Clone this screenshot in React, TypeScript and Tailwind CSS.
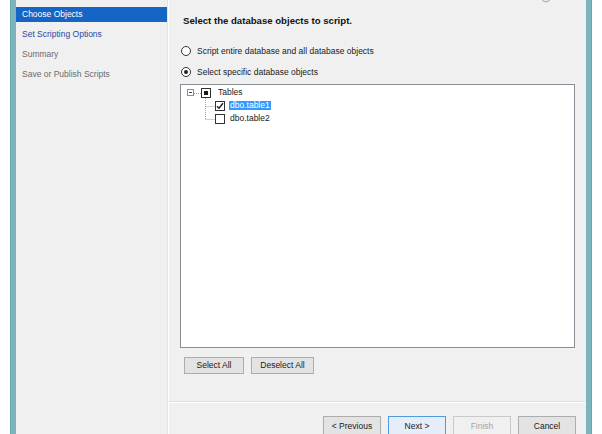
import React from "react";

const Radio = ({ checked, label }: { checked?: boolean; label: string }) => (
  <div className="flex items-center h-[12px] pl-[12px] gap-[6px]">
    <span className="w-[10px] h-[10px] rounded-full border border-[#333333] bg-white flex items-center justify-center">
      {checked && <span className="w-[4px] h-[4px] rounded-full bg-[#222222]" />}
    </span>
    <span className="text-[#1a1a1a]">{label}</span>
  </div>
);

const Check = ({ state }: { state: "none" | "checked" | "mixed" }) => (
  <span className="w-[10px] h-[10px] border border-[#333333] bg-white flex items-center justify-center shrink-0">
    {state === "mixed" && <span className="w-[4px] h-[4px] bg-[#1a1a1a]" />}
    {state === "checked" && (
      <svg width="8" height="8" viewBox="0 0 8 8">
        <path d="M1 4.2 L3 6.2 L7 1.2" fill="none" stroke="#1a1a1a" strokeWidth="1.4" />
      </svg>
    )}
  </span>
);

const Btn = ({
  label,
  w,
  h,
  variant,
}: {
  label: string;
  w: string;
  h: string;
  variant?: "default" | "primary" | "disabled";
}) => {
  const base = "flex items-center justify-center border shrink-0 " + w + " " + h + " ";
  const cls =
    variant === "primary"
      ? "border-[#4f9be0] bg-[#e5eef8] text-[#1a1a1a]"
      : variant === "disabled"
      ? "border-[#c9c9c9] bg-[#f0f0f0] text-[#a5a5a5]"
      : "border-[#adadad] bg-[#e3e3e3] text-[#1a1a1a]";
  return <div className={base + cls}>{label}</div>;
};

export default function App() {
  return (
    <div className="w-[602px] h-[434px] bg-white flex overflow-hidden font-['Liberation_Sans',Arial,sans-serif] text-[8.5px] leading-none">
      <div className="w-[10px] bg-white shrink-0" />
      <div className="w-[6px] shrink-0 bg-[#7cb3bc] border-l border-[#68a6b0]" />
      {/* Left nav */}
      <div className="w-[151px] shrink-0 bg-[#f0f0f0] pt-[7px] flex flex-col gap-[5px]">
        <div className="h-[15px] bg-[#1565c6] text-white flex items-center pl-[6px]">Choose Objects</div>
        <div className="h-[15px] text-[#2b47a0] flex items-center pl-[6px]">Set Scripting Options</div>
        <div className="h-[15px] text-[#6b6b6b] flex items-center pl-[6px]">Summary</div>
        <div className="h-[15px] text-[#6b6b6b] flex items-center pl-[6px]">Save or Publish Scripts</div>
      </div>
      <div className="w-[2px] shrink-0 bg-white border-l border-[#e4e4e4]" />
      {/* Right content */}
      <div className="w-[417px] shrink-0 bg-[#f0f0f0] flex flex-col relative">
        <svg className="absolute left-[372px] top-[-7px]" width="10" height="10" viewBox="0 0 10 10">
          <circle cx="5" cy="5" r="4" fill="#dfe6ee" stroke="#9aaabb" strokeWidth="1" />
        </svg>
        <div className="h-[14px] mt-[14px] pl-[14px] flex items-center font-bold text-[9.6px] text-[#111111]">
          Select the database objects to script.
        </div>
        <div className="mt-[17px]">
          <Radio label="Script entire database and all database objects" />
        </div>
        <div className="mt-[9px]">
          <Radio checked label="Select specific database objects" />
        </div>
        <div className="mt-[6px] mx-[11px] h-[264px] bg-white border border-[#8a8f96] pt-[1px] relative">
          <svg className="absolute left-0 top-[1px]" width="60" height="40" viewBox="0 0 60 40">
            <g stroke="#a0a0a0" strokeWidth="1" strokeDasharray="1 1" fill="none">
              <line x1="13" y1="7.5" x2="20" y2="7.5" />
              <line x1="24.5" y1="12" x2="24.5" y2="33.5" />
              <line x1="24.5" y1="20.5" x2="34" y2="20.5" />
              <line x1="24.5" y1="33.5" x2="34" y2="33.5" />
            </g>
          </svg>
          <div className="h-[13px] flex items-center pl-[6px] relative">
            <span className="w-[7px] h-[7px] border border-[#8e8e8e] bg-white flex items-center justify-center shrink-0">
              <span className="w-[3px] h-px bg-[#444444]" />
            </span>
            <span className="ml-[7px]">
              <Check state="mixed" />
            </span>
            <span className="ml-[7px] text-[#1a1a1a]">Tables</span>
          </div>
          <div className="h-[13px] flex items-center pl-[34px] relative">
            <Check state="checked" />
            <span className="ml-[4px] h-[9px] px-[1px] bg-[#3399ff] text-white flex items-center">dbo.table1</span>
          </div>
          <div className="h-[13px] flex items-center pl-[34px] relative">
            <Check state="none" />
            <span className="ml-[4px] px-[1px] text-[#1a1a1a]">dbo.table2</span>
          </div>
        </div>
        <div className="mt-[9px] pl-[15px] flex gap-[7px]">
          <Btn label="Select All" w="w-[60px]" h="h-[17px]" />
          <Btn label="Deselect All" w="w-[63px]" h="h-[17px]" />
        </div>
        <div className="flex-1" />
        <div className="h-[32px] border-t border-white shadow-[0_-1px_0_#dedede] flex justify-end items-start pt-[13px] pr-[10px] gap-[7px]">
          <Btn label="< Previous" w="w-[58px]" h="h-[21px]" />
          <Btn label="Next >" w="w-[58px]" h="h-[21px]" variant="primary" />
          <Btn label="Finish" w="w-[58px]" h="h-[21px]" variant="disabled" />
          <Btn label="Cancel" w="w-[58px]" h="h-[21px]" />
        </div>
      </div>
      <div className="w-[6px] shrink-0 bg-[#7cb3bc] border-r border-[#68a6b0]" />
      <div className="w-[10px] bg-white shrink-0" />
    </div>
  );
}
